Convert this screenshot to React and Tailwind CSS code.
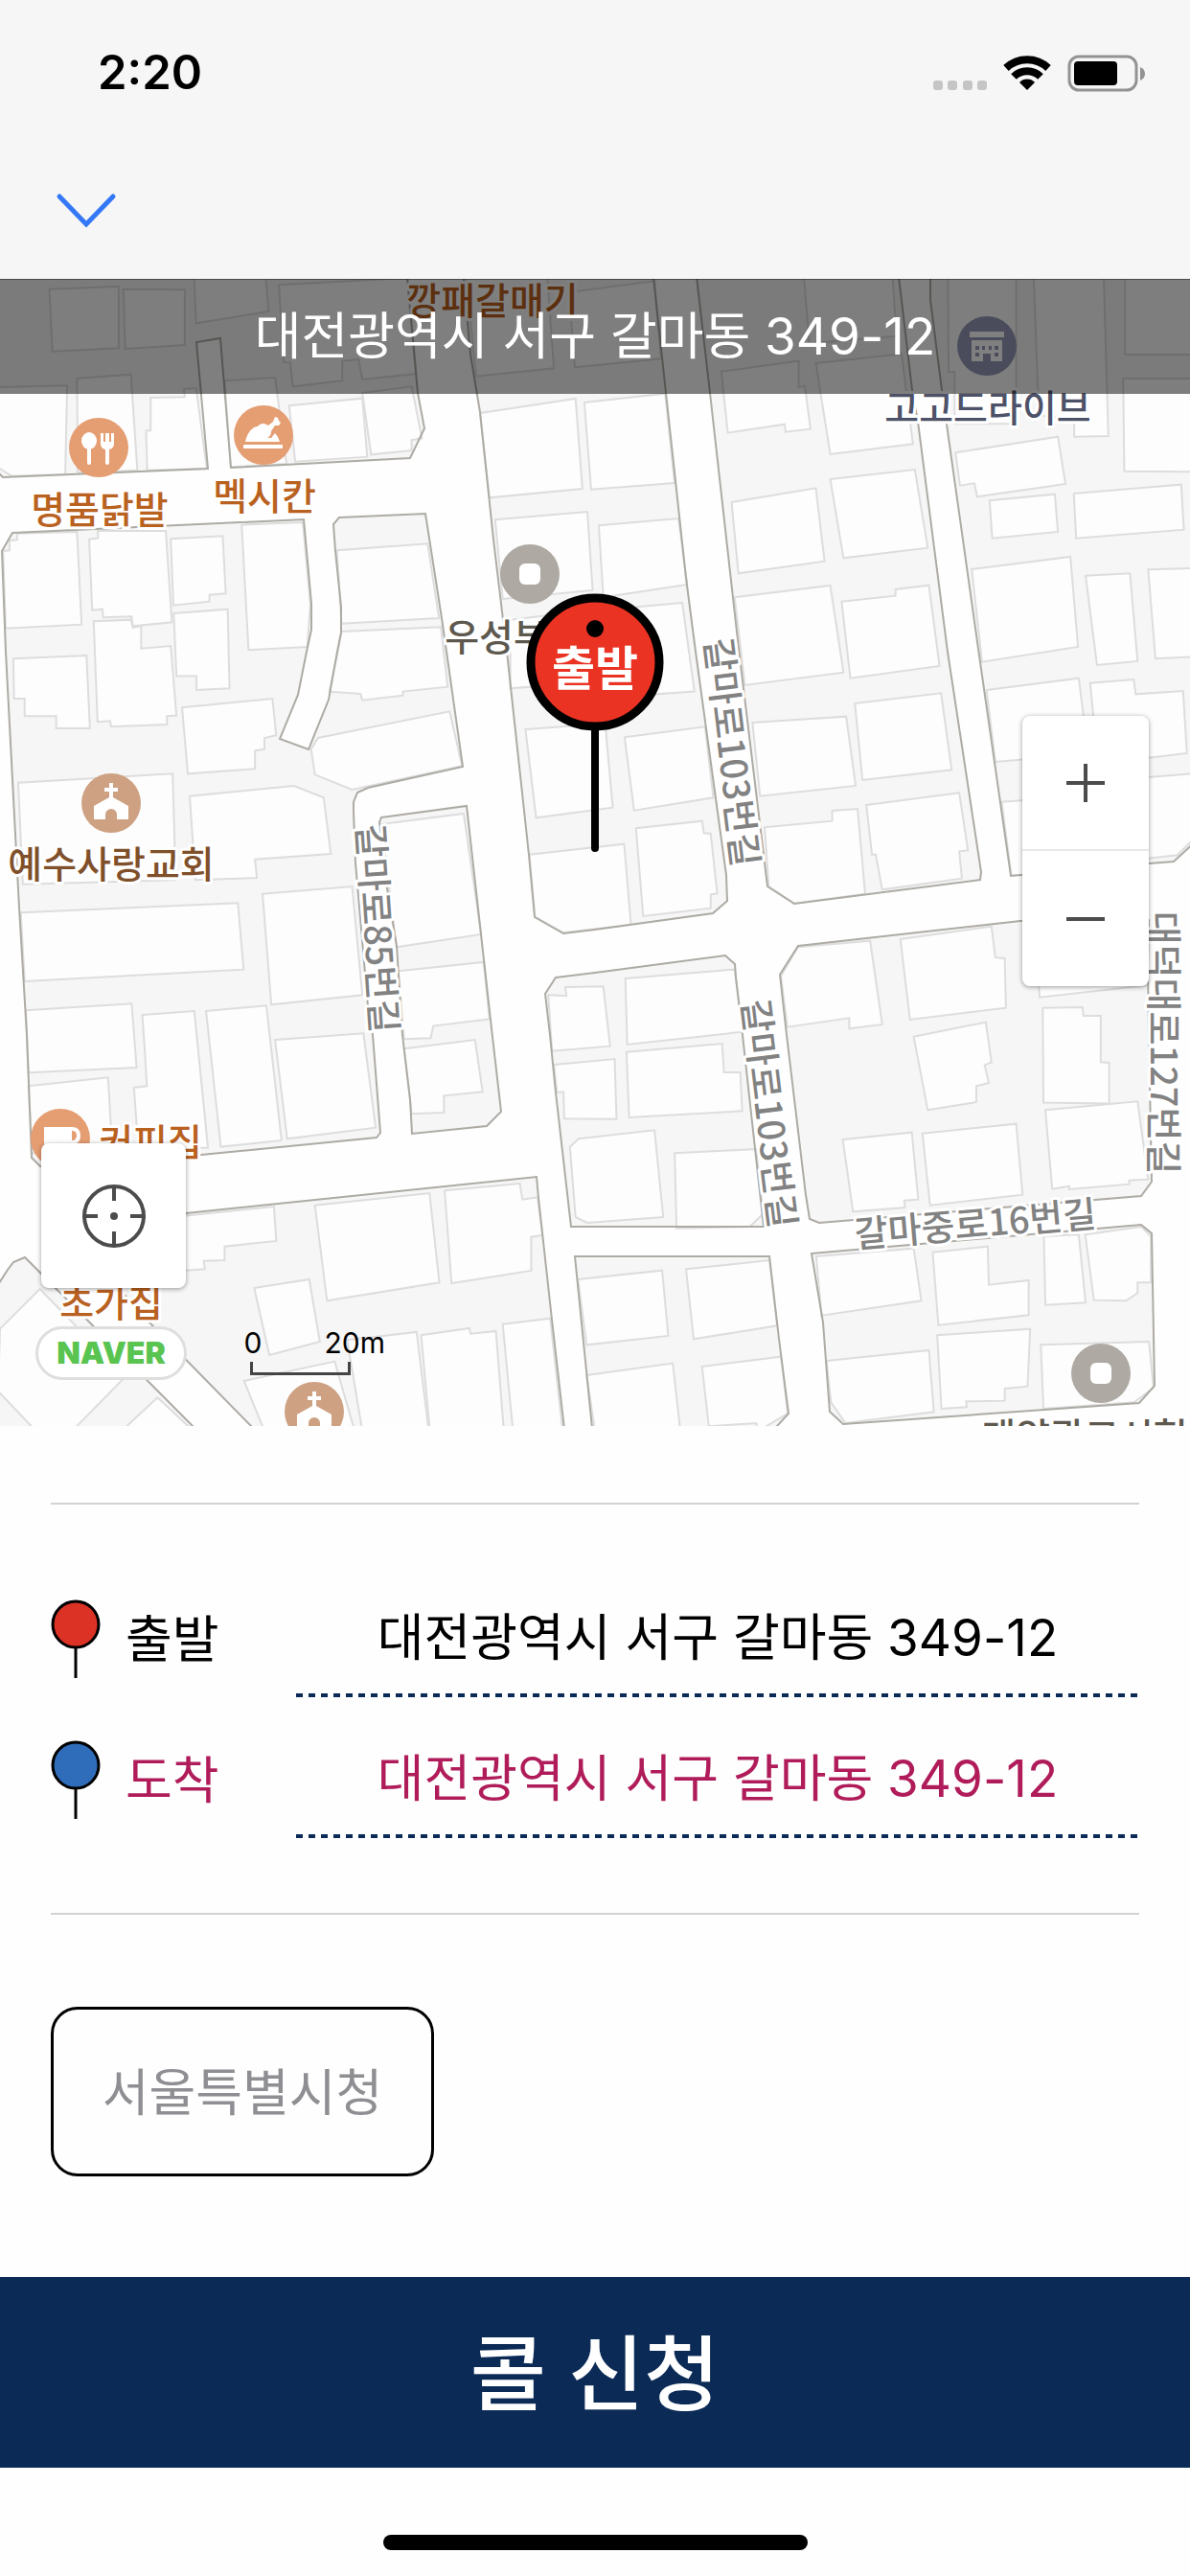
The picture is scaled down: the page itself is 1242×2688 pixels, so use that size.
import React from 'react';

const blocks = [
  '-5,280 424,280 436,410 443,447 428,478 241,488 230,353 205,357 217,489 3,498 -5,490',
  '13,556 317,542 325,630 325,657 320,680 311,725 292,771 322,782 343,730 352,680 356,660 356,633 350,575 348,547 354,540 444,536 461,645 466,680 483,800 384,822 373,827 369,837 369,847 371,900 384,1050 389,1080 397,1182 393,1187 210,1205 70,1222 42,1217 33,1208 28,1080 20,947 6,680 2,575',
  '398,853 487,841 513,1073 523,1160 508,1175 430,1183 428,1147 420,1080 414,987 404,927 396,858',
  '483,280 491,370 501,430 515,563 529,680 552,892 558,957 588,974 621,970 744,953 759,940 758,913 726,680 716,603 695,410 681,280',
  '726,280 741,410 771,677 801,925 829,943 1023,918 1024,910 989,680 958,440 952,407 937,280',
  '971,280 971,313 983,407 1021,677 1055,914 1199,901 1225,899 1248,878 1260,280',
  '580,1020 621,1015 757,997 767,1006 768,1020 775,1080 797,1280 596,1280 580,1140 574,1080 569,1037',
  '833,987 1065,961 1190,948 1199,960 1198,1010 1199,1080 1202,1233 1191,1248 855,1276 845,1272 841,1247 821,1080 814,1017',
  '194,1266 90,1277 75,1290 156,1380 263,1489 268,1500 590,1500 576,1377 562,1250 560,1228',
  '-5,1345 8,1325 14,1317 26,1312 202,1489 205,1500 -5,1500',
  '600,1311 803,1311 813,1397 823,1475 800,1500 619,1500',
  '847,1308 1191,1278 1202,1287 1205,1446 1189,1464 880,1486 866,1473 859,1380',
];

// Building footprints, one survey sheet per group.
const sheets = [
  {
    x: 0,
    y: 280,
    shapes: [
      '130,65 313,57 313,250 138,260',
      '325,65 487,67 487,240 330,252',
      '510,-10 698,-10 708,135 517,172',
      '735,52 1075,30 1097,330 955,348 945,285 902,290 902,352 772,370 765,295 748,295',
      '-10,372 177,367 172,645 30,650 -10,620',
      '203,345 345,332 362,632 205,640',
      '397,405 487,403 485,378 517,375 545,627 388,632 385,508 397,508',
      '592,352 725,342 755,612 608,622',
      '762,430 955,407 968,590 778,605',
      '955,390 1085,370 1112,532 1085,537 1085,570 978,583',
      '1225,-10 1440,-10 1460,313 1255,338',
      '1500,75 1725,40 1742,283 1515,310',
      '1265,453 1517,408 1535,690 1290,718',
      '1540,420 1753,392 1778,672 1558,692',
      '1305,787 1548,762 1562,1008 1325,1035',
      '45,830 203,825 215,1115 15,1127 8,885 25,883 25,852 45,850',
      '235,848 258,845 258,822 437,822 453,1108 350,1120 347,1090 272,1093 270,1067 243,1070',
      '450,847 587,838 595,1018 552,1022 552,1043 457,1055',
      '637,803 798,795 818,1050 810,1185 655,1195',
      '888,883 1127,862 1157,1095 900,1112',
      '900,1137 1162,1123 1180,1310 1062,1325 1062,1337 955,1352 950,1332 868,1325 890,1200',
      '247,1105 345,1100 350,1125 372,1120 372,1190 450,1182 465,1400 440,1402 440,1428 293,1435 290,1417 257,1420',
      '458,1080 600,1067 605,1315 518,1320 518,1277 465,1277',
    ],
  },
  {
    x: 621,
    y: 280,
    shapes: [
      '10,805 220,783 243,990 22,1030',
      '110,1060 230,1047 262,1325 20,1345',
      '548,-10 782,-10 795,212 565,235',
      '333,323 537,290 537,373 553,368 568,503 502,512 500,488 350,515',
      '582,297 808,268 838,550 620,582',
      '360,732 582,688 605,917 378,955',
      '620,660 843,630 877,875 655,907',
      '368,1030 620,993 655,1265 395,1305',
      '650,1043 792,1025 792,1005 880,992 908,1245 673,1283',
      '930,-10 1110,-10 1110,487 948,487 948,325 932,325',
      '1155,-10 1340,-10 1353,525 1263,527 1263,470 1170,460',
      '1397,-10 1600,-10 1600,270 1397,270',
      '1392,345 1600,345 1600,637 1395,635',
      '950,577 1220,527 1240,675 1007,715 1000,673 962,680',
      '1040,727 1212,707 1220,825 1047,845',
      '1262,705 1545,677 1552,818 1268,845',
      '993,942 1253,903 1273,1185 1020,1232',
      '1293,962 1410,955 1430,1230 1323,1242',
      '1458,943 1600,938 1600,1215 1477,1222',
    ],
  },
  {
    x: 0,
    y: 680,
    shapes: [
      '35,22 228,12 237,240 148,240 148,202 65,202 65,147 37,147',
      '480,175 718,147 728,262 697,270 697,305 672,310 672,367 495,382',
      '48,410 455,382 463,715 60,728',
      '500,452 775,420 853,457 872,633 672,650 677,708 515,715',
      '838,270 1185,187 1218,358 928,432 830,385 820,305',
      '55,817 627,787 642,995 65,1032',
      '692,758 928,735 955,1075 715,1105',
      '68,1123 347,1102 360,1302 75,1318',
      '375,1137 512,1125 548,1553 365,1560 353,1365 387,1360 382,1255',
      '543,1125 702,1108 742,1530 582,1550',
      '1005,540 1222,507 1268,885 1045,925',
      '1050,1000 1275,972 1290,1150 1142,1172 1135,1210 1065,1213',
      '1345,-100 1560,-130 1560,95 1345,115',
      '1385,243 1595,225 1615,488 1413,520',
      '1395,635 1645,602 1663,855 1485,880 1410,830',
      '1445,1075 1493,1078 1490,1050 1590,1048 1608,1235 1455,1250',
    ],
  },
  {
    x: 621,
    y: 680,
    shapes: [
      '415,222 662,203 687,420 435,452',
      '685,162 912,130 940,370 705,402',
      '78,268 290,235 312,457 103,497',
      '108,553 282,530 287,568 305,570 322,757 305,760 305,803 127,828',
      '447,550 625,530 625,498 692,492 712,758 525,788 458,735',
      '715,480 960,442 983,622 960,625 967,710 757,745 740,635 730,635',
      '1032,120 1275,83 1300,320 1055,345',
      '1305,98 1420,87 1425,133 1550,123 1560,318 1460,332 1325,340',
      '1072,470 1130,465 1130,700 1097,700',
      '1400,398 1600,380 1600,560 1535,637 1400,655',
      '80,1023 368,995 390,1190 85,1230',
      '535,925 725,905 757,1167 670,1180 670,1147 507,1175 490,1015',
      '805,900 1045,860 1055,957 1080,960 1083,1115 830,1152',
      '1165,980 1172,1082 1450,1045 1450,980',
      '1180,1115 1285,1113 1287,1140 1333,1140 1333,1285 1355,1287 1355,1415 1182,1412',
    ],
  },
  {
    x: 0,
    y: 1080,
    shapes: [
      '725,15 958,-5 990,290 757,325',
      '75,160 285,133 295,345 85,370',
      '1065,43 1252,15 1272,178 1170,190 1170,243 1085,247',
      '1460,93 1620,75 1625,263 1487,262 1485,178 1468,180',
      '1502,350 1525,325 1725,298 1748,570 1548,588 1517,570',
      '480,567 722,537 728,645 592,662 592,705 537,707 540,733 480,738',
      '830,533 1132,495 1158,775 862,832',
      '1172,487 1370,465 1377,515 1417,508 1430,627 1400,632 1400,738 1190,777',
      '670,792 815,765 843,960 710,1002',
      '643,1083 882,1022 935,1240 697,1240',
      '915,955 1098,930 1130,1240 955,1240',
      '1110,940 1237,918 1240,935 1307,927 1328,1240 1133,1240',
      '1325,905 1450,887 1483,1240 1352,1240',
      '0,920 105,795 330,1070 190,1240 95,1240 -5,1115',
      '415,1135 510,1240 320,1240',
    ],
  },
  {
    x: 621,
    y: 1080,
    shapes: [
      '83,53 335,27 340,117 383,117 388,238 90,258',
      '840,5 1030,-40 1045,85 1027,95 1038,150 1005,160 1005,210 877,235',
      '210,370 425,357 443,560 408,600 215,605',
      '653,327 835,305 852,515 815,518 817,540 680,553',
      '863,308 1110,278 1127,500 883,533',
      '1187,235 1430,208 1458,452 1408,455 1408,467 1250,483 1250,473 1205,482',
      '583,693 840,668 860,832 597,878',
      '890,680 1035,662 1038,782 1143,768 1143,877 905,908',
      '1183,630 1275,625 1293,838 1187,845',
      '1292,625 1440,600 1465,630 1465,775 1430,775 1430,808 1400,832 1315,830',
      '610,1020 880,987 893,1180 660,1215 622,1150',
      '902,940 1147,920 1140,1100 1080,1107 1080,1145 978,1147 980,1165 913,1170',
      '1175,970 1460,960 1472,1105 1420,1150 1182,1170',
      '-45,765 177,737 193,942 -22,970',
      '240,733 460,705 480,910 260,952',
      '-22,1065 205,1028 225,1240 0,1240',
      '282,1038 490,1007 508,1185 430,1240 425,1215 300,1225',
    ],
  },
];

const roads = [
  { name: '갈마로103번길', x: 763, y: 785, angle: 83 },
  { name: '갈마로103번길', x: 802, y: 1162, angle: 83 },
  { name: '갈마로85번길', x: 393, y: 969, angle: 86 },
  { name: '대덕대로127번길', x: 1214, y: 1088, angle: 90 },
  { name: '갈마중로16번길', x: 1018, y: 1278, angle: -5 },
];

const places = [
  { name: '깡패갈매기', x: 514, y: 328, color: '#b9611f' },
  { name: '명품닭발', x: 104, y: 546, color: '#b9611f' },
  { name: '멕시칸', x: 276, y: 532, color: '#b9611f' },
  { name: '고고드라이브', x: 1031, y: 440, color: '#4d5268' },
  { name: '우성부', x: 518, y: 679, color: '#5e594f' },
  { name: '예수사랑교회', x: 116, y: 916, color: '#80502b' },
  { name: '커피집', x: 157, y: 1206, color: '#b9611f' },
  { name: '초가집', x: 116, y: 1374, color: '#b9611f' },
  { name: '태양광고시험', x: 1132, y: 1513, color: '#5e594f' },
];

function Badge({ x, y, color, children }) {
  return (
    <g transform={`translate(${x} ${y})`}>
      <circle r="31" fill={color} />
      <g fill="#fff">{children}</g>
    </g>
  );
}

function Church() {
  return (
    <path d="M-2 -21h4v5h5v4h-5v6L18 3v14H6V12a6 6 0 0 0 -12 0v5h-12V3L-2 -6v-6h-5v-4h5z" />
  );
}

function Square() {
  return <rect x="-11" y="-11" width="22" height="22" rx="6" />;
}

function MapCanvas() {
  return (
    <svg
      className="block h-full w-full font-['Noto_Sans_CJK_KR',sans-serif]"
      viewBox="0 291 1242 1197"
      preserveAspectRatio="xMidYMid slice"
      role="img"
      aria-label="지도"
    >
      <rect x="-20" y="270" width="1300" height="1240" fill="#fefefe" />
      <g fill="#f6f6f6">
        {blocks.map((p) => (
          <polygon key={p} points={p} />
        ))}
      </g>
      {sheets.map((s) => (
        <g
          key={`${s.x}-${s.y}`}
          transform={`translate(${s.x} ${s.y}) scale(0.396 0.3333)`}
          fill="#fdfdfd"
          stroke="#dddddd"
          strokeWidth="2"
        >
          {s.shapes.map((p) => (
            <polygon key={p} points={p} vectorEffect="non-scaling-stroke" />
          ))}
        </g>
      ))}
      <g fill="none" stroke="#aeaba5" strokeWidth="2">
        {blocks.map((p) => (
          <polygon key={p} points={p} />
        ))}
      </g>

      <g
        fill="#828282"
        stroke="#fff"
        strokeWidth="6"
        strokeLinejoin="round"
        paintOrder="stroke"
        textAnchor="middle"
        fontSize="38"
        fontWeight="500"
      >
        {roads.map((r) => (
          <text key={`${r.name}${r.y}`} transform={`translate(${r.x} ${r.y}) rotate(${r.angle})`} y="13">
            {r.name}
          </text>
        ))}
      </g>

      <Badge x={103} y={467} color="#e59d72">
        <ellipse cx="-10" cy="-7" rx="8" ry="9" />
        <rect x="-12" y="0" width="4" height="18" rx="2" />
        <path d="M2 -15h3v9h2v-9h4v9h2v-9h3v11q0 5 -5 6v14q0 2 -2 2t-2 -2V2q-5 -1 -5 -6z" />
      </Badge>
      <Badge x={275} y={454} color="#e59d72">
        <path d="M-19 7C-17 -3 -11 -9 -6 -9c2 -3 6 -4 9 -2l2 1 5 -4 2 -5 3 1 1 3 2 2 -2 3 -4 0 -4 6c0 4 -2 6 -4 7l4 0 4 -5q4 4 5 9z" />
        <rect x="-21" y="10" width="41" height="4" rx="1" />
      </Badge>
      <Badge x={553} y={599} color="#aeaaa3">
        <Square />
      </Badge>
      <Badge x={1030} y={361} color="#9499b8">
        <path
          fillRule="evenodd"
          d="M-18 -15h36v6h-36zM-16 -6h32v22H4V8h-8v8h-12zM-12 0v4h4v-4zM-5 0v4h3v-4zM2 0v4h3v-4zM8 0v4h4v-4zM-12 7v4h4v-4zM8 7v4h4v-4z"
        />
      </Badge>
      <Badge x={116} y={838} color="#cda182">
        <Church />
      </Badge>
      <Badge x={63} y={1188} color="#e59d72">
        <path fillRule="evenodd" d="M-17 -12h29q9 0 9 9t-9 9l-4 0q-3 7 -8 7h-9q-8 0 -8 -8zM12 -8v10q5 0 5 -5t-5 -5z" />
      </Badge>
      <Badge x={328} y={1473} color="#cda182">
        <Church />
      </Badge>
      <Badge x={1149} y={1433} color="#aeaaa3">
        <Square />
      </Badge>

      <g
        stroke="#fff"
        strokeWidth="6"
        strokeLinejoin="round"
        paintOrder="stroke"
        textAnchor="middle"
        fontSize="39"
        fontWeight="500"
      >
        {places.map((p) => (
          <text key={p.name} x={p.x} y={p.y} fill={p.color}>
            {p.name}
          </text>
        ))}
      </g>

      <path d="M621 760V885" stroke="#000" strokeWidth="8" strokeLinecap="round" />
      <circle cx="621" cy="691" r="67" fill="#ea3323" stroke="#000" strokeWidth="9" />
      <circle cx="621" cy="656" r="9" />
      <text x="621" y="715" fill="#fff" fontSize="49" fontWeight="700" textAnchor="middle">
        출발
      </text>
    </svg>
  );
}

function MapSection() {
  return (
    <section className="relative h-[1197px] w-full overflow-hidden">
      <MapCanvas />
      <h1 className="absolute inset-x-0 top-0 flex h-30 items-center justify-center border-t border-black/40 bg-black/50 text-[53px] text-white">
        대전광역시 서구 갈마동 349-12
      </h1>

      <div className="absolute top-[456px] right-[43px] flex w-33 flex-col divide-y-2 divide-[#e8e8e8] rounded-lg bg-white text-[#4c4c4c] shadow-[0_1px_5px_rgba(0,0,0,0.4)]">
        <button type="button" aria-label="확대" className="flex h-[141px] items-center justify-center">
          <svg width="40" height="40" viewBox="0 0 40 40" stroke="currentColor" strokeWidth="4">
            <path d="M0 20H40M20 0V40" />
          </svg>
        </button>
        <button type="button" aria-label="축소" className="flex h-[141px] items-center justify-center">
          <svg width="40" height="40" viewBox="0 0 40 40" stroke="currentColor" strokeWidth="4">
            <path d="M0 20H40" />
          </svg>
        </button>
      </div>

      <button
        type="button"
        aria-label="현재 위치"
        className="absolute bottom-36 left-[43px] flex size-[151px] items-center justify-center rounded-lg bg-white text-[#4c4c4c] shadow-[0_1px_5px_rgba(0,0,0,0.4)]"
      >
        <svg width="68" height="68" viewBox="0 0 68 68" fill="none" stroke="currentColor" strokeWidth="4">
          <circle cx="34" cy="34" r="31" />
          <path d="M34 2V18M34 50V66M2 34H17M51 34H66" />
          <circle cx="34" cy="34" r="4" fill="currentColor" stroke="none" />
        </svg>
      </button>

      <a
        href="#naver"
        className="absolute bottom-12 left-[37px] flex h-14 w-[158px] items-center justify-center rounded-full border-3 border-[#dedede] bg-white font-['Inter',sans-serif] text-[32px] font-black text-[#5ac451]"
      >
        NAVER
      </a>

      <div className="absolute bottom-[53px] left-[252px] flex w-[150px] flex-col">
        <div className="flex justify-between font-['Inter',sans-serif] text-[30px] leading-8 text-black">
          <span className="w-6 text-center">0</span>
          <span>20m</span>
        </div>
        <div className="mx-[9px] mt-1 h-[14px] w-[105px] border-x-[3px] border-b-[3px] border-[#444]" />
      </div>
    </section>
  );
}

function PinIcon({ color }) {
  return (
    <svg width="52" height="82" viewBox="0 0 52 82" aria-hidden="true">
      <path d="M26 50V82" stroke="#000" strokeWidth="3" />
      <circle cx="26" cy="26" r="24" fill={color} stroke="#000" strokeWidth="3" />
    </svg>
  );
}

function AddressRow({ id, label, pin, value, tone }) {
  return (
    <div className={`flex h-[147px] items-stretch text-[53px] ${tone}`}>
      <label htmlFor={id} className="flex w-64 items-center gap-[26px] pt-6 leading-none">
        <PinIcon color={pin} />
        <span className="pt-1">{label}</span>
      </label>
      <div className="flex min-w-0 flex-1 flex-col">
        <input
          id={id}
          type="text"
          defaultValue={value}
          className="min-h-0 w-full flex-1 bg-transparent pt-7 text-center outline-none"
        />
        <div className="h-1 bg-[repeating-linear-gradient(90deg,#0b2a56_0_7px,transparent_7px_13px)]" />
      </div>
    </div>
  );
}

function StatusBar() {
  return (
    <div className="flex items-center justify-between pt-12 pr-[46px] pl-[102px]">
      <span className="font-['Inter',sans-serif] text-[49px] leading-14 font-semibold">2:20</span>
      <svg width="224" height="40" viewBox="0 0 224 40" aria-hidden="true">
        <g fill="#c5c5c5">
          <rect x="2" y="28" width="10" height="10" rx="3" />
          <rect x="17" y="28" width="10" height="10" rx="3" />
          <rect x="33" y="28" width="10" height="10" rx="3" />
          <rect x="48" y="28" width="10" height="10" rx="3" />
        </g>
        <g fill="none" stroke="#000" strokeWidth="8">
          <path d="M78 15a32 32 0 0 1 44 0" />
          <path d="M86 24a20 20 0 0 1 28 0" />
        </g>
        <path d="M100 38l-8 -8a11 11 0 0 1 16 0z" />
        <rect x="144" y="3" width="70" height="35" rx="10" fill="none" stroke="#939393" strokeWidth="3" />
        <rect x="149" y="8" width="45" height="25" rx="4" />
        <path d="M218 14q5 2 5 7t-5 7z" fill="#939393" />
      </svg>
    </div>
  );
}

export default function App() {
  return (
    <main className="flex min-h-screen w-full flex-col bg-[#fefefe] font-['Inter','Noto_Sans_CJK_KR',sans-serif] text-black">
      <header className="flex h-[291px] flex-col bg-[#f6f6f6]">
        <StatusBar />
        <nav className="px-14 pt-[92px]">
          <button type="button" aria-label="닫기" className="block">
            <svg width="68" height="44" viewBox="0 0 68 44" fill="none" stroke="#3478f6" strokeWidth="5" strokeLinecap="round">
              <path d="M6 9L34 38L62 9" />
            </svg>
          </button>
        </nav>
      </header>

      <MapSection />

      <section className="flex flex-col px-[53px] pt-20">
        <div className="border-y-2 border-[#d2d2d2] pt-[54px] pb-[78px]">
          <AddressRow id="origin" label="출발" pin="#dc3226" value="대전광역시 서구 갈마동 349-12" tone="text-black" />
          <AddressRow id="destination" label="도착" pin="#2f6dba" value="대전광역시 서구 갈마동 349-12" tone="text-[#b01c5a]" />
        </div>
        <button
          type="button"
          className="mt-[96px] flex h-[177px] w-[400px] items-center justify-center rounded-[28px] border-3 border-black pt-1 text-[53px] text-[#8e8e93]"
        >
          서울특별시청
        </button>
      </section>

      <button
        type="button"
        className="mt-[105px] flex h-[199px] w-full items-center justify-center bg-[#0b2a56] pt-1 text-[86px] leading-none font-medium text-white"
      >
        콜 신청
      </button>
      <div className="mx-auto mt-[70px] h-4 w-[443px] rounded-full bg-black" />
    </main>
  );
}
